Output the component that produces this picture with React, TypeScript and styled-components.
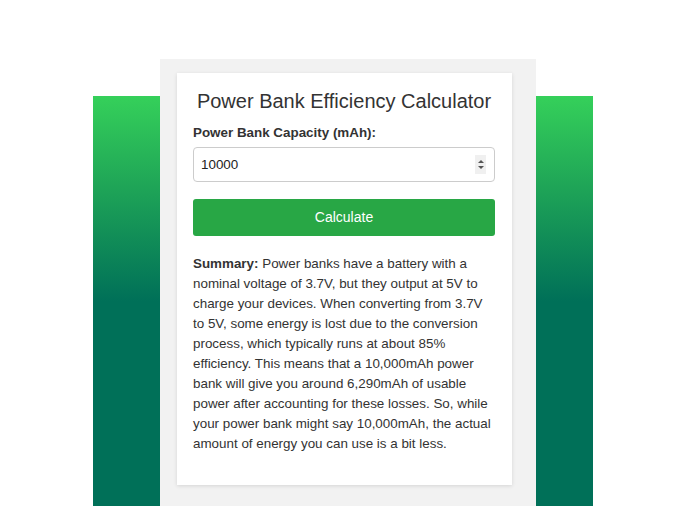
import React from "react";
import styled, { createGlobalStyle } from "styled-components";

const Global = createGlobalStyle`
  html, body { margin: 0; padding: 0; background: #ffffff; }
  body { font-family: "Liberation Sans", Arial, sans-serif; color: #333333; }
  * { box-sizing: border-box; }
  input[type="number"]::-webkit-inner-spin-button,
  input[type="number"]::-webkit-outer-spin-button { -webkit-appearance: none; margin: 0; }
`;

const Stage = styled.div`
  display: grid;
  width: 686px;
  height: 506px;
  overflow: hidden;
`;

const Band = styled.div`
  grid-area: 1 / 1;
  margin: 96px 0 0 93px;
  width: 500px;
  height: 410px;
  background: linear-gradient(to bottom, #35d05a 0px, #1fa557 90px, #007058 205px, #007058 100%);
`;

const Panel = styled.div`
  grid-area: 1 / 1;
  margin: 59px 0 0 160px;
  width: 376px;
  height: 447px;
  background: #f2f2f2;
  padding: 14px 0 0 17px;
`;

const Card = styled.div`
  width: 335px;
  height: 412px;
  background: #ffffff;
  box-shadow: 0 1px 4px rgba(0, 0, 0, 0.12);
  padding: 17px 17px 0 16px;
  display: flex;
  flex-direction: column;
`;

const Title = styled.h1`
  margin: 0;
  font-size: 20px;
  font-weight: normal;
  text-align: center;
  line-height: 23px;
  color: #333333;
`;

const Label = styled.label`
  margin-top: 12px;
  font-size: 13.4px;
  font-weight: bold;
  line-height: 15px;
  color: #333333;
`;

const Field = styled.div`
  position: relative;
  margin-top: 7px;
  width: 302px;
  height: 35px;
`;

const Input = styled.input`
  width: 302px;
  height: 35px;
  border: 1px solid #cccccc;
  border-radius: 4px;
  padding: 0 10px 0 7px;
  font-family: "Liberation Sans", Arial, sans-serif;
  font-size: 13.4px;
  color: #222222;
  outline: none;
`;

const Spinner = styled.div`
  position: absolute;
  right: 9px;
  top: 8px;
  width: 11px;
  height: 19px;
  background: #f0f0f0;
  display: flex;
  flex-direction: column;
  align-items: center;
  justify-content: center;
  gap: 3px;
`;

const Arrow = styled.span<{ $down?: boolean }>`
  width: 0;
  height: 0;
  border-left: 3px solid transparent;
  border-right: 3px solid transparent;
  ${(p) => (p.$down ? "border-top: 3px solid #555;" : "border-bottom: 3px solid #555;")}
`;

const Button = styled.button`
  margin-top: 17px;
  width: 302px;
  height: 37px;
  border: none;
  border-radius: 3px;
  background: #28a745;
  color: #ffffff;
  font-family: "Liberation Sans", Arial, sans-serif;
  font-size: 14px;
  padding: 0 0 2px 0;
`;

const Summary = styled.p`
  margin: 18px 0 0 0;
  font-size: 13.4px;
  line-height: 20px;
  color: #333333;
`;

export default function App() {
  return (
    <>
      <Global />
      <Stage>
        <Band />
        <Panel>
          <Card>
            <Title>Power Bank Efficiency Calculator</Title>
            <Label htmlFor="cap">Power Bank Capacity (mAh):</Label>
            <Field>
              <Input id="cap" type="number" defaultValue={10000} />
              <Spinner>
                <Arrow />
                <Arrow $down />
              </Spinner>
            </Field>
            <Button>Calculate</Button>
            <Summary>
              <strong>Summary:</strong> Power banks have a battery with a nominal voltage of 3.7V, but they
              output at 5V to charge your devices. When converting from 3.7V to 5V, some energy is lost due to
              the conversion process, which typically runs at about 85% efficiency. This means that a 10,000mAh
              power bank will give you around 6,290mAh of usable power after accounting for these losses. So,
              while your power bank might say 10,000mAh, the actual amount of energy you can use is a bit less.
            </Summary>
          </Card>
        </Panel>
      </Stage>
    </>
  );
}
